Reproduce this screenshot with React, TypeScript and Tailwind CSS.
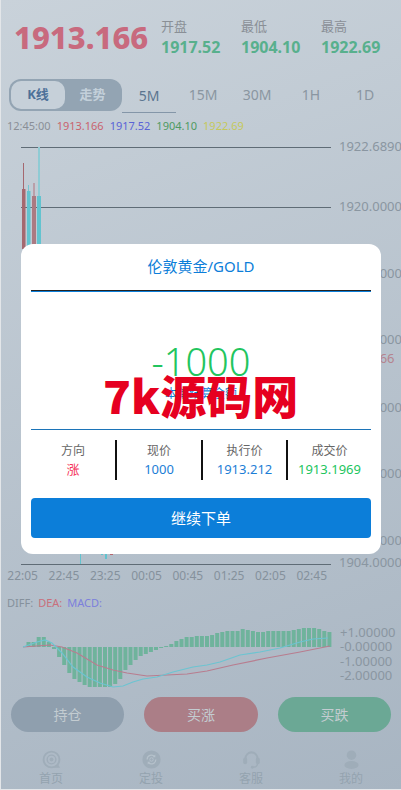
import { Fragment } from "react";

const stats = [
  { label: "开盘", value: "1917.52" },
  { label: "最低", value: "1904.10" },
  { label: "最高", value: "1922.69" },
];

const periods = ["5M", "15M", "30M", "1H", "1D"];
const times = ["22:05", "22:45", "23:25", "00:05", "00:45", "01:25", "02:05", "02:45"];
const gridPrices = ["1922.68900", "1920.00000", "1917.00000", "1914.00000", "1911.00000", "1908.00000", "1905.00000"];
const gridLines = [147, 207, 273, 340, 406, 473, 540, 564];
const labelTops = [146, 206, 273, 339, 407, 473, 540];

const macdBars = [
  5, 5, 10, 10, 5, -2, -10, -18, -26, -32, -35, -38, -40, -40, -40, -40, -40, -37, -32, -23, -18, -13, -9, -7, -5, -3, -1,
  1, 3, 6, 8, 10, 10, 11, 11, 11, 12, 14, 15, 16, 16, 16, 18, 17, 16, 15, 15, 16, 16, 16, 16, 16, 17, 18, 19, 19, 19, 18, 16, 15,
];
const macdLabels = ["+1.00000", "-0.00000", "-1.00000", "-2.00000"];

const deaLine =
  "23,647 50,645 62,647 77,653 97,665 113,670 127,673 147,676 167,675 187,674 207,671 233,665 267,658 300,652 330,646";
const diffLine =
  "23,647 37,642 45,640 52,643 62,653 73,667 87,677 100,683 113,687 123,686 133,682 143,679 157,677 173,672 193,667 207,665 220,662 240,655 260,652 280,648 300,642 313,639 328,638";

const details = [
  { label: "方向", value: "涨", color: "text-[#f5365c]", width: "w-[84px]" },
  { label: "现价", value: "1000", color: "text-[#1c7ed6]", width: "w-[84px]" },
  { label: "执行价", value: "1913.212", color: "text-[#1c7ed6]", width: "w-[83px]" },
  { label: "成交价", value: "1913.1969", color: "text-[#22c55e]", width: "flex-1" },
];

const HomeIcon = () => (
  <svg width="19" height="19" viewBox="0 0 24 24" fill="none">
    <circle cx="12" cy="12" r="10" stroke="#9fadb9" strokeWidth="2.4" />
    <circle cx="12" cy="12" r="5.5" stroke="#9fadb9" strokeWidth="1.8" />
    <circle cx="12" cy="12" r="2.4" fill="#9fadb9" />
    <path d="M15 22.5h8l-2.5-4z" fill="#9fadb9" />
  </svg>
);

const PlanIcon = () => (
  <svg width="19" height="19" viewBox="0 0 24 24" fill="none">
    <circle cx="12" cy="12" r="11.5" fill="#9fadb9" />
    <path d="M6.5 12a5.5 5.5 0 0 1 9.5-3.8M17.5 12a5.5 5.5 0 0 1-9.5 3.8" stroke="#b5c1cb" strokeWidth="1.6" />
    <path d="M16.8 5.8v3.4h-3.4zM7.2 18.2v-3.4h3.4z" fill="#b5c1cb" />
    <circle cx="12" cy="12" r="2.2" stroke="#b5c1cb" strokeWidth="1.2" />
  </svg>
);

const ServiceIcon = () => (
  <svg width="19" height="19" viewBox="0 0 24 24" fill="none">
    <path d="M4.5 13v-2.5a7.5 7.5 0 0 1 15 0V13" stroke="#9fadb9" strokeWidth="2.6" />
    <rect x="1.5" y="9.5" width="5" height="8.5" rx="2.4" fill="#9fadb9" />
    <rect x="17.5" y="9.5" width="5" height="8.5" rx="2.4" fill="#9fadb9" />
    <path d="M19.5 17c0 3-2.5 4.8-6 4.8" stroke="#9fadb9" strokeWidth="1.8" />
    <circle cx="13" cy="21.8" r="1.8" fill="#9fadb9" />
  </svg>
);

const UserIcon = () => (
  <svg width="19" height="19" viewBox="0 0 24 24" fill="none">
    <circle cx="12" cy="6.5" r="6" fill="#9fadb9" />
    <ellipse cx="12" cy="19" rx="9" ry="5" fill="#9fadb9" />
  </svg>
);

const navItems = [
  { label: "首页", icon: <HomeIcon /> },
  { label: "定投", icon: <PlanIcon /> },
  { label: "客服", icon: <ServiceIcon /> },
  { label: "我的", icon: <UserIcon /> },
];

const PriceChart = () => (
  <div className="relative h-[428px]">
    <svg width="401" height="428" viewBox="0 139 401 428" className="block">
      {gridLines.map((y) => (
        <line key={y} x1="21" x2="331" y1={y + 0.5} y2={y + 0.5} stroke="#5f6c76" />
      ))}
      <line x1="23.5" x2="23.5" y1="163" y2="189" stroke="#a5686f" />
      <rect x="22" y="189" width="3.5" height="60" fill="#a5686f" />
      <line x1="28.5" x2="28.5" y1="185" y2="191" stroke="#74c6d0" />
      <rect x="27" y="191" width="3.5" height="60" fill="#62c3cf" />
      <line x1="34" x2="34" y1="183" y2="196" stroke="#b7919a" strokeWidth="1.5" />
      <rect x="32" y="196" width="4" height="60" fill="#ab7a82" />
      <line x1="39" x2="39" y1="147" y2="196" stroke="#8fcbd4" strokeWidth="2" />
      <rect x="37" y="196" width="4" height="60" fill="#62c3cf" />
      <line x1="80.5" x2="80.5" y1="550" y2="564" stroke="#62c3cf" />
      <rect x="101" y="550" width="2" height="5" fill="#62c3cf" />
      <rect x="105" y="550" width="2" height="9" fill="#62c3cf" />
      <rect x="110" y="550" width="3" height="5" fill="#b5666f" />
    </svg>
    {gridPrices.map((price, i) => (
      <span
        key={price}
        className="absolute left-[339px] -translate-y-1/2 text-[13px] leading-none text-[#8a96a1] whitespace-nowrap"
        style={{ top: labelTops[i] - 139 }}
      >
        {price}
      </span>
    ))}
    <span className="absolute left-[339px] top-[219px] -translate-y-1/2 text-[13px] leading-none text-[#b5848f]">
      1913.166
    </span>
    <span className="absolute left-[339px] top-[423px] -translate-y-1/2 text-[13px] leading-none text-[#8a96a1] whitespace-nowrap">
      1904.00000
    </span>
  </div>
);

const MacdChart = () => (
  <div className="relative h-[76px]">
    <svg width="335" height="76" viewBox="0 618 335 76" className="block">
      {macdBars.map((h, i) => (
        <rect
          key={i}
          x={26.5 + i * 5.1}
          y={h > 0 ? 647 - h : 647}
          width="4"
          height={Math.abs(h)}
          fill="#6fb39c"
        />
      ))}
      <polyline points={deaLine} fill="none" stroke="#b87d8f" strokeWidth="1.2" />
      <polyline points={diffLine} fill="none" stroke="#6cc4d1" strokeWidth="1.2" />
    </svg>
    <div className="absolute left-[340px] top-[7px] flex flex-col text-[13px] leading-[14.3px] text-[#8a96a1]">
      {macdLabels.map((label) => (
        <span key={label}>{label}</span>
      ))}
    </div>
  </div>
);

const ResultModal = () => (
  <div className="absolute left-[21px] top-[244px] w-[360px] h-[310px] rounded-xl bg-white px-[10px]">
    <div className="h-[46px] pb-[2px] flex items-center justify-center text-[15px] text-[#0c7ed9]">伦敦黄金/GOLD</div>
    <div className="h-[2px] border-t border-b border-t-[#222222] border-b-[#0c7ed9]" />
    <div className="h-[137px] flex flex-col items-center pt-[47px]">
      <div className="text-[38px] font-light leading-[44px] text-[#22c55e]">-1000</div>
      <div className="mt-[3px] text-xs text-[#0c7ed9]">本单结算金额</div>
    </div>
    <div className="h-px bg-[#1c74b8]" />
    <div className="mt-[10px] flex h-10">
      {details.map((d, i) => (
        <Fragment key={d.label}>
          <div className={`${d.width} flex flex-col items-center justify-center`}>
            <span className="text-xs leading-[19px] text-[#666666]">{d.label}</span>
            <span className={`text-[13px] leading-[19px] ${d.color}`}>{d.value}</span>
          </div>
          {i < 3 && <div className="w-[2px] bg-[#111111]" />}
        </Fragment>
      ))}
    </div>
    <button className="mt-[18px] h-10 w-full rounded bg-[#0c7ed9] text-[15px] text-white">继续下单</button>
  </div>
);

export default function App() {
  return (
    <div className="relative w-[401px] h-[790px] overflow-hidden shadow-[inset_1px_-1px_0_#e3e6e9] bg-[linear-gradient(160deg,#c9d2da,#a8b5c2)] font-['Noto_Sans','Noto_Sans_CJK_SC',sans-serif]">
      <div className="flex h-[79px] pl-[14px] pt-[16px]">
        <div className="w-[147px] text-[31px] font-extrabold leading-[42px] text-[#c86a7e]">1913.166</div>
        <div className="flex">
          {stats.map((s) => (
            <div key={s.label} className="w-20 flex flex-col">
              <span className="text-[13px] leading-[20px] text-[#8a8f96]">{s.label}</span>
              <span className="text-base font-bold leading-[22px] text-[#58b08d]">{s.value}</span>
            </div>
          ))}
        </div>
      </div>

      <div className="flex h-[34px] pl-[9px]">
        <div className="flex w-[113px] h-[32px] rounded-xl bg-[#93a4b3] p-[2px]">
          <div className="w-[54px] rounded-[10px] bg-[#c6d0d9] flex items-center justify-center text-[13px] font-bold text-[#4d7199]">
            K线
          </div>
          <div className="flex-1 flex items-center justify-center text-[13px] font-bold text-[#c3d0da]">走势</div>
        </div>
        {periods.map((p, i) => (
          <div
            key={p}
            className={
              i === 0
                ? "w-[54px] h-[34px] flex items-center justify-center border-b border-[#8496a8] text-sm text-[#5b7590]"
                : "w-[54px] h-[32px] flex items-center justify-center text-sm text-[#8a96a1]"
            }
          >
            {p}
          </div>
        ))}
      </div>

      <div className="flex h-[26px] items-center gap-[6px] pl-[7px] text-[11px]">
        <span className="text-[#8a8f96]">12:45:00</span>
        <span className="text-[#c9636e]">1913.166</span>
        <span className="text-[#5a63d6]">1917.52</span>
        <span className="text-[#4f9a62]">1904.10</span>
        <span className="text-[#c5c95c]">1922.69</span>
      </div>

      <PriceChart />

      <div className="grid grid-cols-[repeat(8,41.3px)] h-[18px] pl-[2px] items-center text-center text-xs text-[#85919c]">
        {times.map((t) => (
          <span key={t}>{t}</span>
        ))}
      </div>

      <div className="mt-[10px] flex h-4 items-center gap-[5px] pl-[7px] text-[11px]">
        <span className="text-[#85919c]">DIFF:</span>
        <span className="text-[#c9707c]">DEA:</span>
        <span className="text-[#7c80dc]">MACD:</span>
      </div>

      <div className="mt-[7px]">
        <MacdChart />
      </div>

      <div className="mt-[3px] flex h-[35px] gap-5 pl-[11px] pr-[10px] text-sm text-[#c3ccd1]">
        <button className="w-[113px] rounded-[18px] bg-[#8f9fae]">持仓</button>
        <button className="w-[114px] rounded-[18px] bg-[#ab7e87]">买涨</button>
        <button className="w-[113px] rounded-[18px] bg-[#6ba895]">买跌</button>
      </div>

      <div className="mt-[18px] flex pl-[1px]">
        {navItems.map((item) => (
          <div key={item.label} className="w-[100px] flex flex-col items-center">
            {item.icon}
            <span className="text-xs leading-[20px] text-[#94a3af]">{item.label}</span>
          </div>
        ))}
      </div>

      <ResultModal />

      <div className="absolute left-[103px] top-[366px] text-[46px] font-black leading-[56px] whitespace-nowrap text-[#e60020] font-['Noto_Sans_CJK_SC',sans-serif]">
        7k源码网
      </div>
    </div>
  );
}
